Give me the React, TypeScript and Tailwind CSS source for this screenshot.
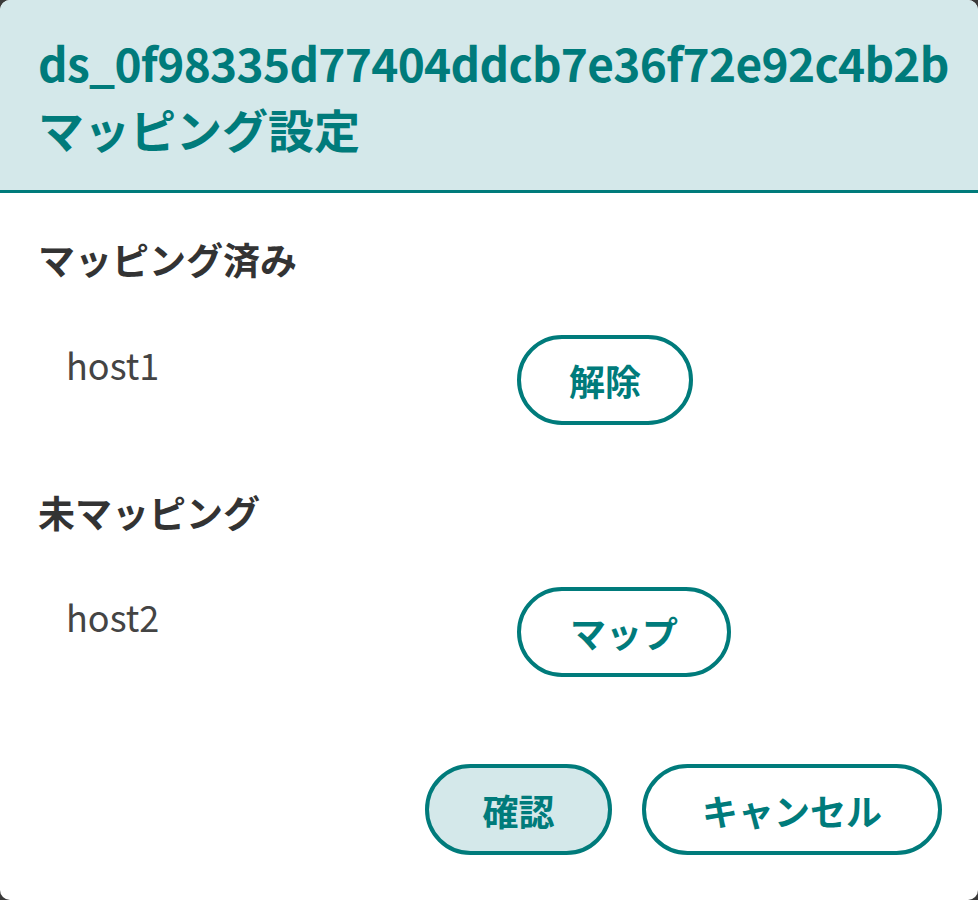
import React from "react";

const FONT = { fontFamily: '"Noto Sans CJK JP", "Noto Sans", sans-serif' };

function Row({ host, label, w }: { host: string; label: string; w: string }) {
  return (
    <div className="flex items-start">
      <div className="w-[479px] pl-[28px] pt-[4px] text-[36px] leading-[50px] text-[#444444]">{host}</div>
      <button
        className={`${w} h-[90px] rounded-full border-4 border-[#007b7b] bg-white text-[36px] font-bold text-[#007b7b] leading-none flex items-center justify-center`}
      >
        {label}
      </button>
    </div>
  );
}

export default function App() {
  return (
    <div className="w-[978px] h-[900px] bg-[#3a3a3a]" style={FONT}>
      <div className="h-full rounded-[10px] overflow-hidden bg-white flex flex-col">
        <div className="h-[193px] bg-[#d4e8ea] border-b-[3px] border-[#007b7b] px-[38px] pt-[29px]">
          <h1 className="text-[46px] font-bold leading-[66px] text-[#007b7b]">
            <span className="tracking-[-0.7px]">ds_0f98335d77404ddcb7e36f72e92c4b2b</span>
            <br />
            マッピング設定
          </h1>
        </div>
        <div className="flex flex-col pl-[38px] pr-[36px] pt-[41px]">
          <h2 className="text-[37px] font-bold leading-[50px] text-[#333333]">マッピング済み</h2>
          <div className="mt-[51px]">
            <Row host="host1" label="解除" w="w-[176px]" />
          </div>
          <h2 className="mt-[62px] text-[37px] font-bold leading-[50px] text-[#333333]">未マッピング</h2>
          <div className="mt-[50px]">
            <Row host="host2" label="マップ" w="w-[214px]" />
          </div>
          <div className="mt-[87px] flex justify-end gap-[30px]">
            <button className="w-[187px] h-[91px] rounded-full border-4 border-[#007b7b] bg-[#d4e8ea] text-[36px] font-bold text-[#007b7b] leading-none flex items-center justify-center">
              確認
            </button>
            <button className="w-[300px] h-[91px] rounded-full border-4 border-[#007b7b] bg-white text-[36px] font-bold text-[#007b7b] leading-none flex items-center justify-center">
              キャンセル
            </button>
          </div>
        </div>
      </div>
    </div>
  );
}
